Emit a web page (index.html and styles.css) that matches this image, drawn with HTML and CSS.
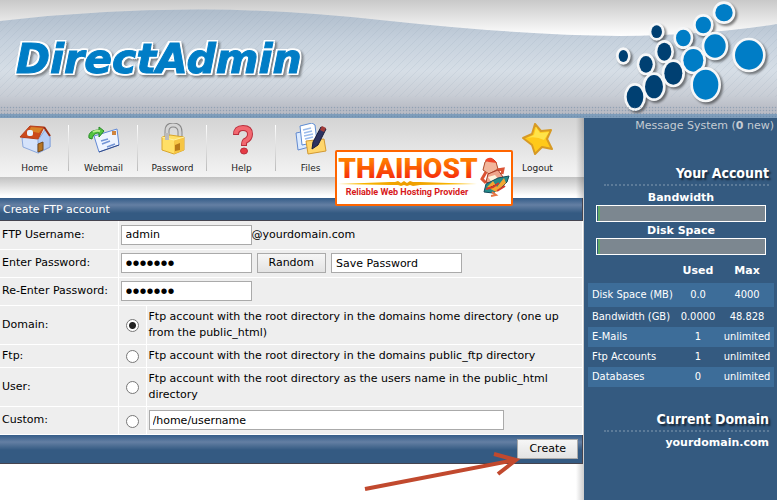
FILE: index.html
```html
<!DOCTYPE html>
<html lang="en">
<head>
<meta charset="utf-8">
<title>DirectAdmin - Create FTP account</title>
<link rel="stylesheet" href="styles.css">
</head>
<body>
<header class="header">
  <svg class="header-wave" viewBox="0 0 777 118" preserveAspectRatio="none" aria-hidden="true">
    <defs>
      <linearGradient id="top" x1="0" y1="0" x2="0" y2="36" gradientUnits="userSpaceOnUse"><stop offset="0" stop-color="#c9c9c9"/><stop offset="1" stop-color="#fff"/></linearGradient>
      <linearGradient id="sky" x1="0" y1="0" x2="0" y2="118" gradientUnits="userSpaceOnUse"><stop offset=".08" stop-color="#aebccb"/><stop offset=".35" stop-color="#c6d1dd"/><stop offset=".6" stop-color="#d6dee6"/><stop offset=".8" stop-color="#c9ced6"/><stop offset=".92" stop-color="#b9bcc5"/></linearGradient>
      <pattern id="lines" width="8" height="8" patternUnits="userSpaceOnUse"><path d="M-2 10L10-2" stroke="#8fa3b8" stroke-opacity=".16"/></pattern>
    </defs>
    <rect width="777" height="50" fill="url(#top)"/>
    <path d="M0 21Q100 9 205 9.500Q290 10 390 21Q520 35 620 36Q710 35 777 24V118H0Z" fill="url(#sky)"/>
    <path d="M0 21Q100 9 205 9.500Q290 10 390 21Q520 35 620 36Q710 35 777 24V97H0Z" fill="url(#lines)"/>
  </svg>
  <h1 class="logo">DirectAdmin</h1>
  <svg class="bubbles" viewBox="0 0 531 354" aria-hidden="true">
    <g fill="#004072">
      <ellipse cx="70" cy="168" rx="14" ry="18"/><ellipse cx="170" cy="95" rx="16" ry="19"/><ellipse cx="138" cy="193" rx="20" ry="25"/><ellipse cx="193" cy="155" rx="21" ry="27"/><ellipse cx="220" cy="220" rx="27" ry="34"/><ellipse cx="162" cy="260" rx="27" ry="35"/><ellipse cx="105" cy="291" rx="25" ry="34"/>
    </g>
    <g fill="#007dc6">
      <ellipse cx="250" cy="114" rx="22" ry="25"/><ellipse cx="310" cy="75" rx="23" ry="25"/><ellipse cx="372" cy="38" rx="26" ry="26"/><ellipse cx="345" cy="138" rx="32" ry="35"/><ellipse cx="280" cy="181" rx="30" ry="34"/><ellipse cx="317" cy="254" rx="38" ry="45"/><ellipse cx="447" cy="165" rx="42" ry="44"/>
    </g>
  </svg>
  <div class="header-dots"></div>
</header>

<div class="layout">
  <main class="main">
    <nav class="nav">
      <a href="#home"><svg viewBox="0 0 32 32" aria-hidden="true">
        <path d="M3 15L22 13L31 14V24L19 30L4 24Z" fill="#d5e3fb" stroke="#8ba8dc"/><path d="M19 17V30L31 24V13L26 7Z" fill="#b5cdf5" stroke="#8ba8dc"/>
        <path d="M11 3L25 4L19 16L1 14Z" fill="#cb4a1c" stroke="#b5401c"/><path d="M12 4L24 5L20 10L10 8Z" fill="#d88228"/><path d="M25 4L31 13" stroke="#9b2c12" stroke-width="2"/>
        <path d="M19 21L24 19V27L19 29Z" fill="#b87624" stroke="#74491a"/><rect x="8" y="7" width="6" height="6" rx="2" fill="#e6f2ff"/></svg>Home</a>
      <a href="#webmail"><svg viewBox="0 0 32 32" aria-hidden="true">
        <path d="M6 13L29 6L31 22L11 29Z" fill="#eef4ff" stroke="#6189d5"/><path d="M11 29L31 22" stroke="#344b88"/><path d="M13 18L20 16M14 21L22 18M19 24L27 21" stroke="#7395d6" stroke-width="1.500"/><rect x="24" y="8" width="4" height="4" fill="#cf8540"/>
        <path d="M4 16C5 11 8 10 11 10V14L16 8L11 4V7C4 7 0 10 1 15Z" fill="#54c340" stroke="#258b26"/><path d="M5 9Q8 7 12 8" stroke="#b7ef8f" fill="none" stroke-width="2"/></svg>Webmail</a>
      <a href="#password"><svg viewBox="0 0 32 32" aria-hidden="true">
        <path d="M10 17V8Q10 2 16 2Q23 2 23 9V14" fill="none" stroke="#888" stroke-width="5"/><path d="M10 17V8Q10 2 16 2Q23 2 23 9V14" fill="none" stroke="#d4d4d4" stroke-width="3"/>
        <path d="M5 14L13 12L27 14V27L17 31L5 27Z" fill="#ffdf66" stroke="#d9a52c"/><path d="M17 17L27 14V27L17 31Z" fill="#f6c544"/><path d="M5 14L17 17L27 14" fill="none" stroke="#fff0a0"/><path d="M18 22L23 20V27L18 28Z" fill="#b87918"/><path d="M10 17V10" stroke="#bbb" stroke-width="4"/></svg>Password</a>
      <a href="#help"><svg viewBox="0 0 32 32" aria-hidden="true">
        <path d="M10 12Q10 5 17 5Q24 5 24 11Q24 16 19 18Q18 19 18 23" fill="none" stroke="#b92e3c" stroke-width="6"/><path d="M10 11Q10 5 17 5Q24 5 24 11Q24 16 19 18Q18 19 18 22" fill="none" stroke="#f26870" stroke-width="4"/><ellipse cx="18" cy="28" rx="3.500" ry="3" fill="#e63b45" stroke="#b92e3c"/></svg>Help</a>
      <a href="#files"><svg viewBox="0 0 32 32" aria-hidden="true">
        <path d="M1 10L11 8L14 24L3 27Z" fill="#dcebff" stroke="#628ad0"/><path d="M5 3L17 0L20 2L22 19L7 22Z" fill="#fff" stroke="#5c8bd2"/><path d="M8 7L16 5M9 10L17 8M9 13L18 11M10 16L18 14" stroke="#9bbcec" stroke-width="1.500"/>
        <path d="M11 18L29 16L31 28L13 31Z" fill="#ffd66c" stroke="#d29932"/><path d="M26 4L31 6L23 22L17 26L18 19Z" fill="#2c3260" stroke="#191c39"/><path d="M27 3L31 5L29 9L25 7Z" fill="#a23b38"/></svg>Files</a>
      <a href="#logout"><svg viewBox="0 0 32 32" aria-hidden="true">
        <path d="M13 1L19 8L29 7L25 16L30 26L20 24L13 31L10 22L1 15L10 11Z" fill="#ffc91a" stroke="#d79a25" stroke-width="2" stroke-linejoin="round"/><path d="M14 4L18 10L27 9L22 17Q14 13 5 15L12 12Z" fill="#ffe34a"/></svg>Logout</a>
    </nav>

    <form class="ftp" action="#">
      <h2 class="bar">Create FTP account</h2>
      <table class="fields">
        <colgroup><col class="c-label"><col class="c-radio"><col></colgroup>
        <tr><th><label for="user">FTP Username:</label></th>
          <td colspan="2"><div class="controls tight"><input class="text" id="user" type="text" value="admin"><span>@yourdomain.com</span></div></td></tr>
        <tr><th><label for="pw">Enter Password:</label></th>
          <td colspan="2"><div class="controls"><input class="text secret" id="pw" type="password" value="secret1"><button type="button">Random</button><input class="text" type="text" value="Save Password" aria-label="Generated password"></div></td></tr>
        <tr><th><label for="pw2">Re-Enter Password:</label></th>
          <td colspan="2"><div class="controls"><input class="text secret" id="pw2" type="password" value="secret1"></div></td></tr>
        <tr class="double"><th><label for="r1">Domain:</label></th><td class="pick"><input id="r1" type="radio" name="root" checked></td><td>Ftp account with the root directory in the domains home directory (one up from the public_html)</td></tr>
        <tr class="single"><th><label for="r2">Ftp:</label></th><td class="pick"><input id="r2" type="radio" name="root"></td><td>Ftp account with the root directory in the domains public_ftp directory</td></tr>
        <tr class="double"><th><label for="r3">User:</label></th><td class="pick"><input id="r3" type="radio" name="root"></td><td>Ftp account with the root directory as the users name in the public_html directory</td></tr>
        <tr><th><label for="r4">Custom:</label></th><td class="pick"><input id="r4" type="radio" name="root"></td><td><div class="controls"><input class="text path" type="text" value="/home/username" aria-label="Custom path"></div></td></tr>
      </table>
      <div class="bar submit"><button type="submit">Create</button></div>
    </form>

    <svg class="banner" viewBox="0 0 178 56" role="img" aria-label="Thaihost, reliable web hosting provider">
      <defs>
        <linearGradient id="fire" x1="0" y1="0" x2="0" y2="1"><stop offset=".25" stop-color="#ff7d00"/><stop offset=".8" stop-color="#f62c0b"/></linearGradient>
        <linearGradient id="gold"><stop offset="0" stop-color="#ffc400"/><stop offset=".5" stop-color="#ee9c00"/><stop offset="1" stop-color="#ffc400"/></linearGradient>
      </defs>
      <rect x="1" y="1" width="176" height="54" rx="1" fill="#fff" stroke="#ff6500" stroke-width="2"/>
      <path d="M3 34L55 32H60L63 31L66 33L69 31L72 33L75 31L78 32H85L142 34L85 35L78 36L75 35L72 36L69 35L66 36L63 35L55 35Z" fill="url(#gold)"/>
      <text class="brand" x="73" y="28" text-anchor="middle" fill="url(#fire)">THAIHOST</text>
      <text class="tagline" x="72" y="45" text-anchor="middle">Reliable Web Hosting Provider</text>
      <g stroke-width="1">
        <path d="M150 12Q157 6 161 12L163 19L154 24L148 20Z" fill="#f2b59b" stroke="#ad4a2b"/><path d="M150 11Q152 7 157 8L162 13L154 12Z" fill="#ef462a"/>
        <path d="M151 22L147 29L151 33M162 20L168 19L167 24" fill="none" stroke="#dc5334" stroke-width="3"/>
        <path d="M153 24L163 20L168 27L160 35L151 32Z" fill="#f0a58c" stroke="#a63924"/><path d="M153 27L160 25L164 30L158 34Z" fill="#fff2db"/>
        <path d="M151 34L163 28L174 26L172 32L166 38L158 43L149 42Z" fill="#248b8b" stroke="#154b5b"/><path d="M152 37L158 31L162 37L169 28L171 33L161 42Z" fill="#f3a632"/><path d="M151 39L158 37L164 33M162 41L170 36" stroke="#d5392a" stroke-width="2"/>
        <path d="M157 42L161 45L156 46" fill="none" stroke="#e87543" stroke-width="2"/>
      </g>
    </svg>
    <svg class="arrow" viewBox="0 0 160 44" aria-hidden="true"><path d="M2 38L152 9M131 3L153 9L135 23" fill="none" stroke="#c1492e" stroke-width="4"/></svg>
  </main>

  <aside class="side">
    <p class="messages"><a href="#messages">Message System (<b>0</b> new)</a></p>
    <h2 class="side-title">Your Account</h2>
    <div class="meter-label">Bandwidth</div><div class="meter"></div>
    <div class="meter-label">Disk Space</div><div class="meter"></div>
    <table class="usage">
      <thead><tr><td></td><th>Used</th><th>Max</th></tr></thead>
      <tbody>
        <tr class="tall"><td>Disk Space (MB)</td><td>0.0</td><td>4000</td></tr>
        <tr><td>Bandwidth (GB)</td><td>0.0000</td><td>48.828</td></tr>
        <tr><td>E-Mails</td><td>1</td><td>unlimited</td></tr>
        <tr><td>Ftp Accounts</td><td>1</td><td>unlimited</td></tr>
        <tr><td>Databases</td><td>0</td><td>unlimited</td></tr>
      </tbody>
    </table>
    <h2 class="side-title">Current Domain</h2>
    <p class="domain">yourdomain.com</p>
  </aside>
</div>
</body>
</html>
```
FILE: styles.css
```css
* { box-sizing: border-box; }
body {
  margin: 0;
  min-height: 100vh;
  display: flex;
  flex-direction: column;
  font: 11px/16px "DejaVu Sans", Verdana, sans-serif;
  color: #000;
  background: #fff;
}
h1, h2, p { margin: 0; }
a { color: inherit; text-decoration: none; }

.header {
  position: relative;
  display: flex;
  justify-content: space-between;
  height: 118px;
  overflow: hidden;
}
.header-wave { position: absolute; inset: 0; width: 100%; height: 100%; }
.header-dots {
  position: absolute;
  inset: auto 0 0 0;
  height: 12px;
  background:
    radial-gradient(circle, #5f7d9b70 30%, transparent 50%) 0 0 / 3px 3px,
    linear-gradient(transparent 8px, #7e9dbb 8px);
}
.logo {
  position: relative;
  padding: 32px 0 0 16px;
  font: italic bold 41px/54px "DejaVu Sans", Verdana, sans-serif;
  color: #007dc6;
  -webkit-text-stroke: 1px #007dc6;
  text-shadow:
    2px 0 #fff, -2px 0 #fff, 0 2px #fff, 0 -2px #fff,
    2px 2px #fff, -2px 2px #fff, 2px -2px #fff, -2px -2px #fff;
  filter: drop-shadow(2px 2px 1px #0006);
}
.bubbles {
  position: relative;
  width: 177px;
  height: 118px;
  stroke: #f6f7f8;
  stroke-width: 16px;
  paint-order: stroke;
  filter: drop-shadow(2px 2px 1px #0007);
}

.layout { flex: 1; display: grid; grid-template-columns: 1fr 193px; }
.main {
  position: relative;
  background: linear-gradient(to right, transparent calc(100% - 8px), #ccc) #fff;
}
.nav {
  display: flex;
  height: 80px;
  padding: 5px 12px 20px 0;
  background:
    linear-gradient(to left, #0003, transparent 8px),
    linear-gradient(#d4d4d4, #f4f4f4 59px, #c2c2c2 59px, #fff 78px);
}
.nav a {
  display: flex;
  flex-direction: column;
  align-items: center;
  gap: 6px;
  width: 69px;
  font-size: 9px;
  line-height: 14px;
  color: #222;
  background: linear-gradient(#fff, #bbb) right 2px / 1px 46px no-repeat;
}
.nav a:nth-last-child(-n+2) { background: none; }
.nav a:last-child { margin-left: auto; }
.nav svg { width: 32px; height: 32px; }

.ftp { margin-right: 1px; background: #fff; }
.bar {
  height: 23px;
  padding: 0 3px;
  font-size: 11px;
  font-weight: normal;
  line-height: 23px;
  color: #fff;
  background: linear-gradient(#345c88, #647fa3 7px, #345a82 15px);
  border: solid #45444f;
  border-width: 0 1px 1px 0;
}
.submit {
  display: flex;
  justify-content: flex-end;
  align-items: center;
  height: 29px;
  padding: 0 4px;
}
.fields { width: 100%; border-collapse: collapse; table-layout: fixed; }
.c-label { width: 118px; }
.c-radio { width: 28px; }
.fields tr { height: 28px; }
.fields .double { height: 39px; }
.fields .single { height: 23px; }
.fields th, .fields td {
  padding: 0 2px;
  text-align: left;
  font-weight: normal;
  background: #eee;
  border: solid #fff;
  border-width: 0 1px 1px 0;
}
.fields th { white-space: nowrap; }
.fields .pick { text-align: center; }
.pick input {
  appearance: none;
  display: block;
  width: 13px;
  height: 13px;
  margin: 2px auto 0;
  border: 1px solid #777;
  border-radius: 50%;
  background: #fff;
}
.pick input:checked { background: radial-gradient(circle, #222 3px, #fff 4px); }
.controls { display: flex; align-items: center; gap: 5px; }
.tight { gap: 0; }
.text {
  width: 131px;
  height: 20px;
  padding: 0 4px;
  font: inherit;
  color: #000;
  background: #fff;
  border: 1px solid #aaa;
}
.secret { font: 20px/18px "Liberation Sans", Arial, sans-serif; }
.path { width: 355px; padding: 0 3px; }
button {
  height: 20px;
  padding: 0 11px;
  font: inherit;
  line-height: 16px;
  color: #000;
  background: linear-gradient(#f6f6f6, #e3e3e3);
  border: 1px solid #aaa;
}

.banner { position: absolute; top: 32px; left: 335px; width: 178px; height: 56px; }
.brand { font: 900 28px Roboto, sans-serif; }
.tagline { font: bold 9px Roboto, sans-serif; fill: #d71920; }
.arrow { position: absolute; top: 333px; left: 363px; width: 160px; height: 44px; }

.side { padding: 0 3px 0 4px; color: #fff; background: #345a80; }
.messages { padding-bottom: 7px; text-align: right; color: #c5ccd3; }
.side-title {
  margin: 21px 5px 3px 16px;
  text-align: right;
  font: bold 14px/22px "DejaVu Sans Condensed", Tahoma, sans-serif;
  text-shadow: 2px 2px 2px #0009;
  border-bottom: 2px dotted #5c7b99;
}
.meter-label { padding: 3px 0 2px; text-align: center; font-weight: bold; line-height: 11px; }
.meter {
  height: 17px;
  margin: 0 8px;
  background: linear-gradient(to right, #345a80 1px, #62a866 1px, #62a866 3px, #7c8790 3px);
  border: 1px solid #fff;
}
.usage {
  width: 100%;
  margin-top: 4px;
  border-collapse: collapse;
  table-layout: fixed;
  font-family: "DejaVu Sans Condensed", Tahoma, sans-serif;
  white-space: nowrap;
}
.usage td, .usage th { height: 20px; padding: 0; text-align: center; }
.usage th { height: 24px; font-family: "DejaVu Sans", Verdana, sans-serif; }
.usage td:first-child { width: 88px; padding-left: 4px; text-align: left; }
.usage td:nth-child(3), .usage th:last-child { width: 54px; }
.usage .tall td { height: 24px; }
.usage tbody tr:nth-child(odd) { background: #3d6d99; }
.domain { padding-right: 5px; text-align: right; font-weight: bold; }
```
